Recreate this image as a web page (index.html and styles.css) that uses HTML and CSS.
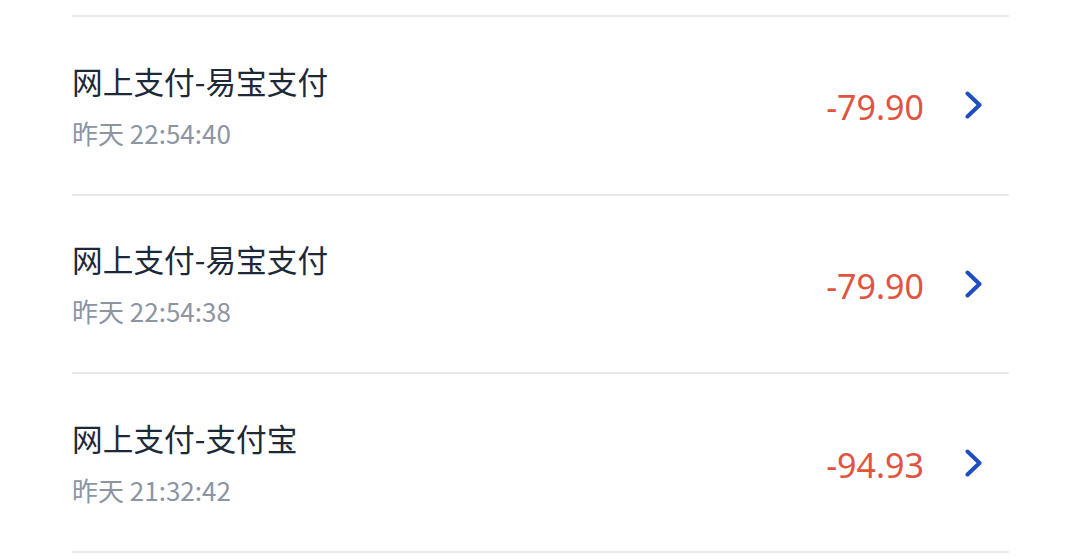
FILE: index.html
```html
<!DOCTYPE html>
<html lang="zh">
<head>
<meta charset="utf-8">
<link rel="stylesheet" href="styles.css">
</head>
<body>
<ul class="list">
  <li class="row">
    <div class="info">
      <div class="title">网上支付-易宝支付</div>
      <div class="time">昨天 22:54:40</div>
    </div>
    <div class="amount">-79.90</div>
    <svg class="chev" viewBox="0 0 18 28" width="18" height="28"><path d="M2.5 2.5 L14.5 14 L2.5 25.5" fill="none" stroke="#1f4fbf" stroke-width="4" stroke-linecap="round" stroke-linejoin="round"/></svg>
  </li>
  <li class="row">
    <div class="info">
      <div class="title">网上支付-易宝支付</div>
      <div class="time">昨天 22:54:38</div>
    </div>
    <div class="amount">-79.90</div>
    <svg class="chev" viewBox="0 0 18 28" width="18" height="28"><path d="M2.5 2.5 L14.5 14 L2.5 25.5" fill="none" stroke="#1f4fbf" stroke-width="4" stroke-linecap="round" stroke-linejoin="round"/></svg>
  </li>
  <li class="row">
    <div class="info">
      <div class="title">网上支付-支付宝</div>
      <div class="time">昨天 21:32:42</div>
    </div>
    <div class="amount">-94.93</div>
    <svg class="chev" viewBox="0 0 18 28" width="18" height="28"><path d="M2.5 2.5 L14.5 14 L2.5 25.5" fill="none" stroke="#1f4fbf" stroke-width="4" stroke-linecap="round" stroke-linejoin="round"/></svg>
  </li>
</ul>
</body>
</html>
```
FILE: styles.css
```css
html, body {
  margin: 0;
  padding: 0;
  background: #ffffff;
}
body {
  font-family: "Noto Sans CJK SC", "Noto Sans", sans-serif;
}
.list {
  list-style: none;
  margin: 0;
  padding: 15px 0 0 72px;
  width: 937px;
}
.row {
  display: flex;
  align-items: center;
  height: 176.67px;
  border-top: 2px solid #e8eaed;
  padding-right: 26px;
}
.row:last-child {
  border-bottom: 2px solid #e8eaed;
}
.info {
  flex: 1;
  display: flex;
  flex-direction: column;
  gap: 17px;
}
.title {
  font-size: 30.7px;
  line-height: 38px;
  color: #1d2838;
}
.time {
  font-size: 26px;
  line-height: 32px;
  color: #8d95a2;
}
.amount {
  font-family: "Noto Sans", sans-serif;
  font-size: 34px;
  color: #e0543f;
  margin-right: 41px;
  padding-top: 4px;
}
.chev {
  display: block;
}
```
